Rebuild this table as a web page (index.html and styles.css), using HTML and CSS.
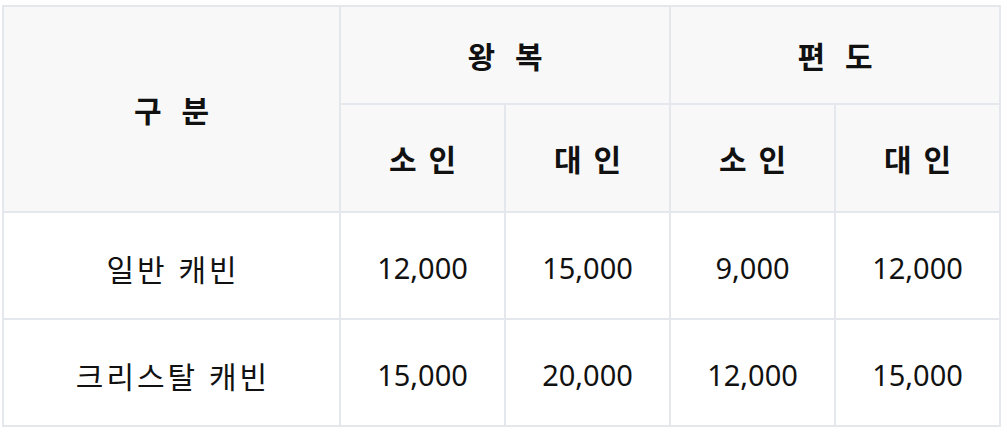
FILE: index.html
```html
<!DOCTYPE html>
<html lang="ko">
<head>
<meta charset="utf-8">
<link rel="stylesheet" href="styles.css">
</head>
<body>
<table class="fare">
  <colgroup>
    <col class="c-head">
    <col class="c-val">
    <col class="c-val">
    <col class="c-val">
    <col class="c-val">
  </colgroup>
  <thead>
    <tr class="r1">
      <th rowspan="2">구 분</th>
      <th colspan="2">왕 복</th>
      <th colspan="2">편 도</th>
    </tr>
    <tr class="r2">
      <th>소 인</th>
      <th>대 인</th>
      <th>소 인</th>
      <th>대 인</th>
    </tr>
  </thead>
  <tbody>
    <tr>
      <td class="name">일반 캐빈</td>
      <td>12,000</td>
      <td>15,000</td>
      <td>9,000</td>
      <td>12,000</td>
    </tr>
    <tr>
      <td class="name">크리스탈 캐빈</td>
      <td>15,000</td>
      <td>20,000</td>
      <td>12,000</td>
      <td>15,000</td>
    </tr>
  </tbody>
</table>
</body>
</html>
```
FILE: styles.css
```css
html, body {
  margin: 0;
  padding: 0;
  background: #ffffff;
}
body {
  padding: 5px 0 0 2px;
  font-family: "Noto Sans", "Noto Sans CJK KR", sans-serif;
  color: #111111;
}
.fare {
  border-collapse: collapse;
  width: 999px;
  table-layout: fixed;
}
.c-head { width: 337px; }
.c-val { width: 165px; }
.fare th,
.fare td {
  border: 2px solid #e4e7eb;
  text-align: center;
  vertical-align: middle;
  padding: 0;
  font-size: 29px;
}
.fare th {
  background: #f8f8f8;
  font-weight: 700;
  font-size: 30px;
  letter-spacing: 2px;
  padding-left: 2px;
}
.r1 th {
  height: 96px;
  letter-spacing: 6px;
  padding-left: 6px;
}
.r2 th { height: 106px; }
.fare td {
  font-weight: 400;
  height: 101px;
  padding-top: 4px;
}
.fare td.name {
  font-size: 30px;
  letter-spacing: 3px;
  padding-left: 3px;
}
```
